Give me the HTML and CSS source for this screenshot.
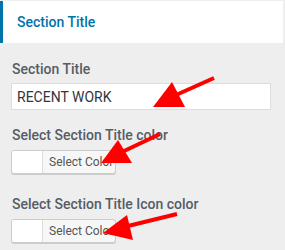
FILE: index.html
```html
<!DOCTYPE html>
<html>
<head>
	<link rel="stylesheet" href="styles.css">
</head>
<body>
	<div class="sectionHeader">
		<h3 class="sectionHeading">Section Title</h3>
	</div>

	<div class="controls">
		<div class="control">
			<label class="controlTitle">Section Title</label>
			<input class="textInput" type="text" value="RECENT WORK">
		</div>

		<div class="control control-color">
			<label class="controlTitle">Select Section Title color</label>
			<button class="colorPicker"><span class="swatch"></span><span class="pickerText">Select Color</span></button>
		</div>

		<div class="control control-color">
			<label class="controlTitle">Select Section Title Icon color</label>
			<button class="colorPicker"><span class="swatch"></span><span class="pickerText">Select Color</span></button>
		</div>
	</div>

	<svg class="arrows" width="285" height="250" viewBox="0 0 285 250">
		<g fill="#ff0000" stroke="#ff0000" stroke-width="4" stroke-linecap="butt">
			<line x1="214" y1="78" x2="176" y2="95"/>
			<polygon stroke="none" points="153,107 172,82 185,107"/>
			<line x1="160" y1="134" x2="122" y2="152"/>
			<polygon stroke="none" points="101,163 118,140 132,163"/>
			<line x1="177" y1="214" x2="128" y2="226"/>
			<polygon stroke="none" points="103,233 127,215 133,240"/>
		</g>
	</svg>
</body>
</html>
```

FILE: styles.css
```css
body,
html {
	margin: 0;
	padding: 0;
	background-color: #eeeeee;
	font-family: Roboto, "Liberation Sans", sans-serif;
}

body {
	position: relative;
	height: 250px;
	overflow: hidden;
}

.sectionHeader {
	margin: 1px 2px 0 0;
	height: 42px;
	background-color: #ffffff;
	border-left: 3px solid #0073aa;
	padding-left: 14px;
	display: flex;
	align-items: center;
}

.sectionHeading {
	margin: 0;
	font-size: 14px;
	font-weight: 500;
	color: #0073aa;
}

.controls {
	padding: 16px 15px 0 11px;
}

.control {
	display: flex;
	flex-direction: column;
	align-items: flex-start;
}

.controlTitle {
	display: block;
	font-size: 14px;
	font-weight: 500;
	line-height: 20px;
	color: #555d66;
	padding-left: 1px;
	margin-bottom: 4px;
}

.textInput {
	box-sizing: border-box;
	width: 260px;
	height: 27px;
	margin: 0 0 15px 0;
	padding: 0 5px;
	border: 1px solid #dddddd;
	background-color: #ffffff;
	font-family: Roboto, "Liberation Sans", sans-serif;
	font-size: 14px;
	color: #32373c;
	outline: none;
}

.control-color .controlTitle {
	margin-bottom: 5px;
}

.control-color {
	margin-bottom: 20px;
}

.control-color:last-child {
	margin-bottom: 0;
}

.colorPicker {
	display: flex;
	align-items: stretch;
	box-sizing: border-box;
	width: 105px;
	height: 24px;
	padding: 0;
	border: 1px solid #cccccc;
	border-radius: 3px;
	box-shadow: 0 1px 0 #cccccc;
	background-color: #f7f7f7;
	cursor: pointer;
}

.swatch {
	flex: none;
	width: 30px;
	background-color: #ffffff;
	border-right: 1px solid #dddddd;
	border-radius: 2px 0 0 2px;
}

.pickerText {
	display: flex;
	align-items: center;
	padding-left: 6px;
	white-space: nowrap;
	font-family: Roboto, "Liberation Sans", sans-serif;
	font-size: 12px;
	color: #555555;
}

.arrows {
	position: absolute;
	left: 0;
	top: 0;
	pointer-events: none;
}
```
